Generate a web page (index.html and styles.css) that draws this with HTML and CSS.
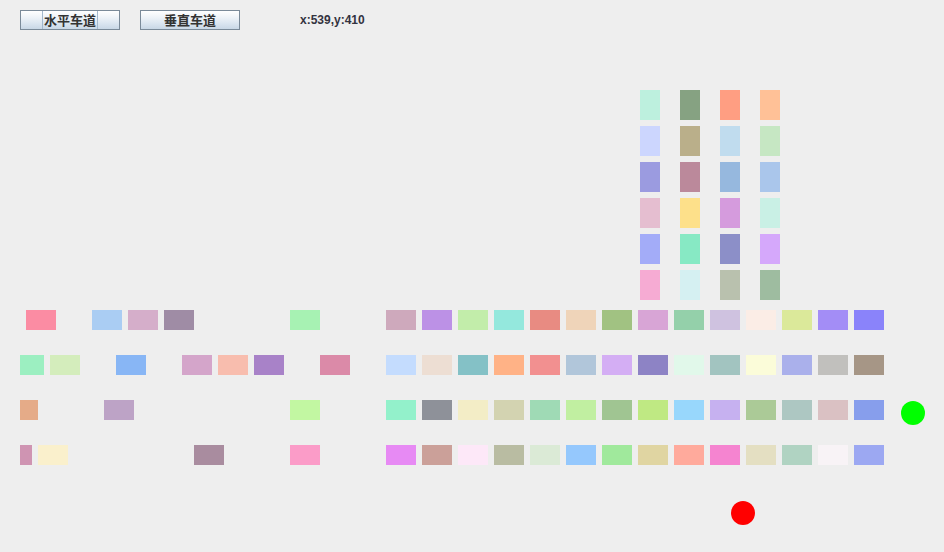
FILE: index.html
```html
<!DOCTYPE html>
<html>
<head>
<meta charset="utf-8">
<link rel="stylesheet" href="styles.css">
</head>
<body>
<div class="scene">
  <div class="toolbar">
    <button class="btn"><span class="label focused">水平车道</span></button>
    <button class="btn"><span class="label">垂直车道</span></button>
    <span class="status">x:539,y:410</span>
  </div>

  <div class="vlane">
    <i style="background:#bdf0de"></i><i style="background:#86a282"></i><i style="background:#ff9e82"></i><i style="background:#ffc197"></i>
    <i style="background:#ccd6fe"></i><i style="background:#baaf8a"></i><i style="background:#c0dcee"></i><i style="background:#c6e7c3"></i>
    <i style="background:#9b9be0"></i><i style="background:#bb899b"></i><i style="background:#96b8de"></i><i style="background:#aac6eb"></i>
    <i style="background:#e5bed0"></i><i style="background:#fde08a"></i><i style="background:#d59bdd"></i><i style="background:#c9f0e5"></i>
    <i style="background:#a3acf8"></i><i style="background:#87e9c4"></i><i style="background:#8c8fc8"></i><i style="background:#d5a8fb"></i>
    <i style="background:#f6abd3"></i><i style="background:#d5f0f2"></i><i style="background:#b9c1ae"></i><i style="background:#9ebca0"></i>
  </div>

  <div class="hlanes">
    <div class="lane l1">
      <i style="left:6px;background:#fb8ca3"></i>
      <i style="left:72px;background:#aacdf3"></i>
      <i style="left:108px;background:#d5aeca"></i>
      <i style="left:144px;background:#9f8ca5"></i>
      <i style="left:270px;background:#a7f2b3"></i>
    </div>
    <div class="lane l2">
      <i style="left:-6px;background:#9cefc1"></i>
      <i style="left:30px;background:#d4edbc"></i>
      <i style="left:96px;background:#88b6f5"></i>
      <i style="left:162px;background:#d4a5ca"></i>
      <i style="left:198px;background:#f8bdae"></i>
      <i style="left:234px;background:#a882c8"></i>
      <i style="left:300px;background:#db8aa8"></i>
    </div>
    <div class="lane l3">
      <i style="left:-12px;background:#e5ab88"></i>
      <i style="left:84px;background:#bda3c6"></i>
      <i style="left:270px;background:#c2f7a2"></i>
    </div>
    <div class="lane l4">
      <i style="left:-18px;background:#cf94b2"></i>
      <i style="left:18px;background:#faf0cc"></i>
      <i style="left:174px;background:#a98c9f"></i>
      <i style="left:270px;background:#fb9cc8"></i>
    </div>
  </div>

  <div class="queue">
    <i style="background:#cea9bc"></i><i style="background:#bc91e6"></i><i style="background:#c2edaa"></i><i style="background:#94e8dd"></i><i style="background:#e88b82"></i><i style="background:#efd4b9"></i><i style="background:#a1c282"></i><i style="background:#d8a5d6"></i><i style="background:#94d0aa"></i><i style="background:#cfc2e0"></i><i style="background:#fbede6"></i><i style="background:#dbe99a"></i><i style="background:#a38df6"></i><i style="background:#8a83fa"></i>
    <i style="background:#c4dcfe"></i><i style="background:#edded3"></i><i style="background:#84c1c6"></i><i style="background:#ffb286"></i><i style="background:#f29090"></i><i style="background:#b1c6da"></i><i style="background:#d4aef4"></i><i style="background:#8d83c5"></i><i style="background:#e1f8ea"></i><i style="background:#a2c4c0"></i><i style="background:#fbfcd9"></i><i style="background:#aab0eb"></i><i style="background:#c1c0bd"></i><i style="background:#a69686"></i>
    <i style="background:#93f1cb"></i><i style="background:#8e9199"></i><i style="background:#f3edc6"></i><i style="background:#d3d3b1"></i><i style="background:#9fdab5"></i><i style="background:#c1efa1"></i><i style="background:#a0c592"></i><i style="background:#bfe983"></i><i style="background:#98d7fc"></i><i style="background:#c6b1f0"></i><i style="background:#abca97"></i><i style="background:#adc7c2"></i><i style="background:#dac1c3"></i><i style="background:#879eec"></i>
    <i style="background:#e78af4"></i><i style="background:#cba099"></i><i style="background:#fde8f8"></i><i style="background:#b9bca2"></i><i style="background:#dbead6"></i><i style="background:#95c8fd"></i><i style="background:#a0e99c"></i><i style="background:#e0d5a2"></i><i style="background:#ffaa9c"></i><i style="background:#f584d0"></i><i style="background:#e4dfc2"></i><i style="background:#b0d3c2"></i><i style="background:#f8f3f6"></i><i style="background:#9ca8f2"></i>
  </div>

  <span class="light green"></span>
  <span class="light red"></span>
</div>
</body>
</html>
```

FILE: styles.css
```css
html, body {
  margin: 0;
  padding: 0;
  background: #eeeeee;
}

.scene {
  position: relative;
  width: 944px;
  height: 552px;
  overflow: hidden;
  background: #eeeeee;
}

.toolbar {
  display: flex;
  align-items: center;
  gap: 20px;
  padding: 10px 20px 0 20px;
  height: 20px;
}

.btn {
  box-sizing: border-box;
  width: 100px;
  height: 20px;
  margin: 0;
  padding: 0;
  border: 1px solid #7a8a99;
  border-radius: 0;
  background: linear-gradient(#ffffff 0%, #eef3f8 35%, #dae5f0 70%, #c8d7e6 100%);
  display: flex;
  align-items: center;
  justify-content: center;
  font-family: "Noto Sans CJK SC", "Noto Sans", sans-serif;
  font-weight: bold;
  font-size: 13px;
  color: #333333;
}

.label {
  box-sizing: border-box;
  display: flex;
  align-items: center;
  justify-content: center;
  height: 18px;
  width: 56px;
  line-height: 18px;
}

.label.focused {
  border-left: 1px solid #a3b8cc;
  border-right: 1px solid #a3b8cc;
}

.status {
  margin-left: 40px;
  font-family: "Liberation Sans", Arial, sans-serif;
  font-weight: bold;
  font-size: 12px;
  color: #333340;
}

.vlane {
  position: absolute;
  left: 640px;
  top: 90px;
  display: grid;
  grid-template-columns: repeat(4, 20px);
  grid-auto-rows: 30px;
  column-gap: 20px;
  row-gap: 6px;
}

.vlane i, .queue i {
  display: block;
}

.hlanes {
  position: absolute;
  left: 20px;
  top: 310px;
  width: 366px;
  display: flex;
  flex-direction: column;
  gap: 25px;
}

.lane {
  position: relative;
  height: 20px;
  overflow: hidden;
}

.lane i {
  position: absolute;
  top: 0;
  width: 30px;
  height: 20px;
}

.queue {
  position: absolute;
  left: 386px;
  top: 310px;
  display: grid;
  grid-template-columns: repeat(14, 30px);
  grid-auto-rows: 20px;
  column-gap: 6px;
  row-gap: 25px;
}

.light {
  position: absolute;
  width: 24px;
  height: 24px;
  border-radius: 50%;
}

.light.green {
  left: 901px;
  top: 401px;
  background: #00ff00;
}

.light.red {
  left: 731px;
  top: 501px;
  background: #ff0000;
}
```
